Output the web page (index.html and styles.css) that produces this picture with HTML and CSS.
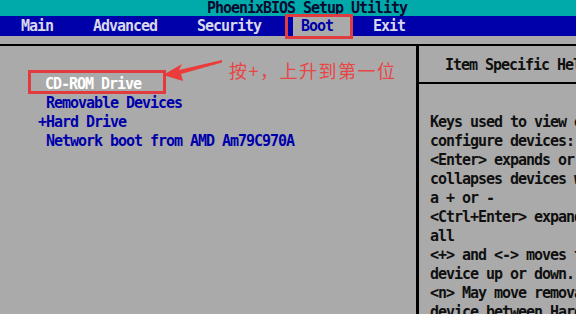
FILE: index.html
```html
<!DOCTYPE html>
<html>
<head>
<meta charset="utf-8">
<link rel="stylesheet" href="styles.css">
</head>
<body>
<div class="screen">
  <div class="titlebar">PhoenixBIOS Setup Utility</div>
  <nav class="menubar">
    <span class="menu-item">Main</span>
    <span class="menu-item">Advanced</span>
    <span class="menu-item">Security</span>
    <span class="menu-item active">Boot</span>
    <span class="menu-item">Exit</span>
  </nav>
  <div class="main">
    <section class="left">
      <ul class="boot-list">
        <li class="selected">CD-ROM Drive</li>
        <li>Removable Devices</li>
        <li class="expand">+Hard Drive</li>
        <li>Network boot from AMD Am79C970A</li>
      </ul>
    </section>
    <aside class="help">
      <div class="help-head">Item Specific Help</div>
      <div class="help-body">Keys used to view or
configure devices:
&lt;Enter&gt; expands or
collapses devices with
a + or -
&lt;Ctrl+Enter&gt; expands
all
&lt;+&gt; and &lt;-&gt; moves the
device up or down.
&lt;n&gt; May move removable
device between Hard</div>
    </aside>
  </div>

  <div class="mark mark-boot"></div>
  <div class="mark mark-cdrom"></div>
  <svg class="arrow" width="70" height="30" viewBox="0 0 70 30">
    <polygon points="3,17 22,6 19,12 62,2 62,4.5 21,16 23,23" fill="#ec3b3b"/>
  </svg>
  <div class="note">按+，上升到第一位</div>
</div>
</body>
</html>
```

FILE: styles.css
```css
html, body {
  margin: 0;
  padding: 0;
}
body {
  width: 576px;
  height: 314px;
  overflow: hidden;
  background: #aaaaaa;
}
.screen {
  position: relative;
  width: 576px;
  height: 314px;
  overflow: hidden;
  background: #aaaaaa;
  font-family: "DejaVu Sans Mono", "Liberation Mono", monospace;
  font-size: 15px;
  font-weight: bold;
  letter-spacing: -1.03px;
}
.titlebar {
  height: 16px;
  line-height: 16px;
  background: #00aaaa;
  color: #0a0a30;
  padding-left: 207px;
  white-space: pre;
}
.menubar {
  display: flex;
  gap: 40px;
  height: 20px;
  line-height: 21px;
  background: #0000aa;
  color: #d8d8ec;
  padding-left: 21px;
}
.menu-item {
  white-space: pre;
}
.menu-item.active {
  background: #aaaaaa;
  color: #0000aa;
  padding: 0 17px 0 8px;
  margin: 0 -17px 0 -8px;
}
.main {
  display: flex;
  margin-top: 8px;
  border-top: 2px solid #000;
  height: 270px;
}
.left {
  width: 416px;
  flex: none;
  padding-top: 29px;
}
.boot-list {
  list-style: none;
  margin: 0;
  padding: 0 0 0 46px;
  line-height: 19px;
  color: #0000aa;
}
.boot-list li {
  white-space: pre;
}
.boot-list li.selected {
  color: #ffffff;
  margin-left: -1px;
}
.boot-list li.expand {
  margin-left: -8px;
}
.help {
  flex: 1;
  border-left: 3px solid #000;
  color: #101010;
  overflow: hidden;
}
.help-head {
  height: 38px;
  box-sizing: border-box;
  padding: 10px 0 0 26px;
  line-height: 19px;
  border-bottom: 2px solid #000;
  white-space: pre;
}
.help-body {
  padding: 29px 0 0 11px;
  line-height: 19px;
  white-space: pre;
}
.mark {
  position: absolute;
  border: 3px solid #e23b3f;
  box-sizing: border-box;
}
.mark-boot {
  left: 285px;
  top: 14px;
  width: 68px;
  height: 25px;
}
.mark-cdrom {
  left: 28px;
  top: 70px;
  width: 138px;
  height: 24px;
}
.arrow {
  position: absolute;
  left: 160px;
  top: 58px;
}
.note {
  position: absolute;
  left: 229px;
  top: 58px;
  font-family: "Noto Sans CJK SC", sans-serif;
  font-weight: 400;
  font-size: 18px;
  line-height: 24px;
  letter-spacing: 1.5px;
  color: #e84545;
  white-space: pre;
}
```
